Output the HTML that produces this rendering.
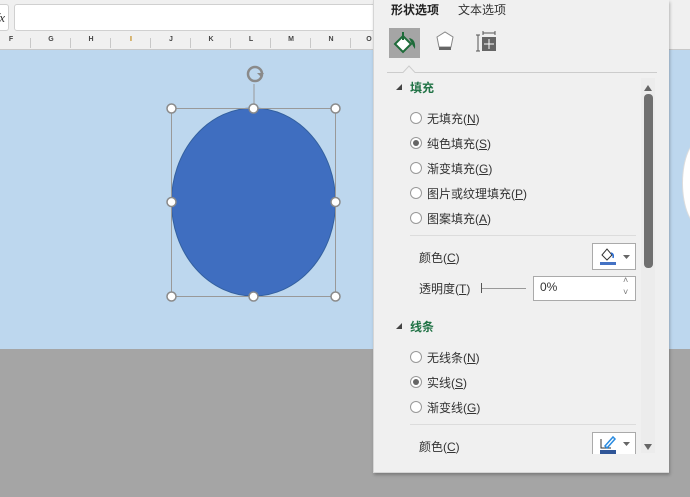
<!DOCTYPE html>
<html><head><meta charset="utf-8">
<style>
*{margin:0;padding:0;box-sizing:border-box}
body{width:690px;height:497px;overflow:hidden;position:relative;background:#a5a5a5;font-family:"Liberation Sans","Noto Sans CJK SC",sans-serif;font-size:12px;color:#333}
.abs{position:absolute}
.top{left:0;top:0;width:690px;height:35px;background:#f0f0f0}
.fbox{left:14px;top:4px;width:380px;height:27px;background:#fff;border:1px solid #d0d0d0;border-radius:3px}
.fx{left:-10px;top:4px;width:19px;height:27px;background:#fff;border:1px solid #d0d0d0;border-radius:3px;font-style:italic;font-size:13px;line-height:25px;text-align:right;padding-right:3px;font-family:"Liberation Serif",serif}
.cols{left:0;top:35px;width:690px;height:15px;background:#f0f0f0;border-bottom:1px solid #c8c8c8}
.col{position:absolute;top:36px;font-size:7px;font-weight:bold;color:#444;width:10px;text-align:center}
.sep{position:absolute;top:38px;width:1px;height:10px;background:#c8c8c8}
.blue{left:0;top:50px;width:690px;height:299px;background:#bdd7ee}
.panel{left:373px;top:0;width:296px;height:473px;background:#f0f0f0;border-left:1px solid #d5d5d5;border-bottom:1px solid #d5d5d5;box-shadow:1px 2px 3px rgba(0,0,0,.25)}
.t{position:absolute;white-space:nowrap;font-size:12px;color:#333}
.g{color:#217346;font-weight:bold}
.radio{position:absolute;width:12px;height:12px;border:1px solid #999;border-radius:50%;background:#fff}
.radio.on::after{content:"";position:absolute;left:2px;top:2px;width:6px;height:6px;border-radius:50%;background:#666}
.hr{position:absolute;height:1px;background:#dcdcdc}
.tri{position:absolute;width:0;height:0;border-left:6px solid transparent;border-bottom:6px solid #444}
u{text-decoration:underline}
</style></head><body>
<div class="abs top"></div>
<div class="abs fx">fx</div>
<div class="abs fbox"></div>
<div class="abs cols"></div>
<div class="col" style="left:6px">F</div>
<div class="sep" style="left:30px"></div>
<div class="col" style="left:46px">G</div>
<div class="sep" style="left:70px"></div>
<div class="col" style="left:86px">H</div>
<div class="sep" style="left:110px"></div>
<div class="col" style="left:126px;color:#c08000">I</div>
<div class="sep" style="left:150px"></div>
<div class="col" style="left:166px">J</div>
<div class="sep" style="left:190px"></div>
<div class="col" style="left:206px">K</div>
<div class="sep" style="left:230px"></div>
<div class="col" style="left:246px">L</div>
<div class="sep" style="left:270px"></div>
<div class="col" style="left:286px">M</div>
<div class="sep" style="left:310px"></div>
<div class="col" style="left:326px">N</div>
<div class="sep" style="left:350px"></div>
<div class="col" style="left:364px">O</div>
<div class="abs blue"></div>
<div class="abs" style="left:682px;top:138px;width:40px;height:90px;border-radius:50%;background:#fff;border:1px solid #ddd"></div>

<svg class="abs" style="left:0;top:0" width="373" height="349">
<line x1="254" y1="84" x2="254" y2="108" stroke="#999"/>
<circle cx="255" cy="74" r="7" fill="none" stroke="#8a8a8a" stroke-width="2.5"/>
<path d="M257 73 l7 0 l-3 4z" fill="#8a8a8a"/>
<ellipse cx="253.5" cy="202" rx="82" ry="94" fill="#3f6ec0" stroke="#33609f" stroke-width="1"/>
<rect x="171.5" y="108.5" width="164" height="188" fill="none" stroke="#999"/>
<g fill="#fff" stroke="#8a8a8a" stroke-width="1.5">
<circle cx="171.5" cy="108.5" r="4.5"/><circle cx="253.5" cy="108.5" r="4.5"/><circle cx="335.5" cy="108.5" r="4.5"/>
<circle cx="171.5" cy="202" r="4.5"/><circle cx="335.5" cy="202" r="4.5"/>
<circle cx="171.5" cy="296.5" r="4.5"/><circle cx="253.5" cy="296.5" r="4.5"/><circle cx="335.5" cy="296.5" r="4.5"/>
</g>
</svg>

<div class="abs panel">
<div class="t" style="left:17px;top:1px;font-weight:bold;color:#222">形状选项</div>
<div class="t" style="left:84px;top:1px">文本选项</div>
<div class="abs" style="left:15px;top:28px;width:31px;height:30px;background:#a5a5a5"></div>
<svg class="abs" style="left:15px;top:28px" width="110" height="30">
<path d="M6 16 L14 8 L22 16 L14 24 Z" fill="#fff" stroke="#1e6b3a" stroke-width="2"/>
<line x1="14" y1="4" x2="14" y2="12" stroke="#1e6b3a" stroke-width="2"/>
<path d="M20 10 Q27 11 26 21 L24 18 Z" fill="#1e6b3a"/>
<path d="M48 9 L56 4 L64 9 L62 19 L50 19 Z" fill="#fff" stroke="#888"/>
<rect x="50" y="19" width="12" height="3" fill="#666"/>
<line x1="89" y1="7" x2="89" y2="23" stroke="#555"/><line x1="87" y1="7" x2="91" y2="7" stroke="#555"/><line x1="87" y1="23" x2="91" y2="23" stroke="#555"/>
<line x1="94" y1="5" x2="106" y2="5" stroke="#555"/><line x1="94" y1="3" x2="94" y2="7" stroke="#555"/><line x1="106" y1="3" x2="106" y2="7" stroke="#555"/>
<rect x="93" y="9" width="14" height="14" fill="#666"/>
<path d="M100 11v10M95 16h10" stroke="#fff"/>
</svg>
<svg class="abs" style="left:13px;top:64px" width="272" height="10"><path d="M0 8.5 H16 L22 2 L28 8.5 H270" fill="none" stroke="#ccc"/></svg>
<div class="tri" style="left:22px;top:84px"></div>
<div class="t g" style="left:36px;top:79px">填充</div>
<div class="radio" style="left:36px;top:112px"></div><div class="t" style="left:53px;top:110px">无填充(<u>N</u>)</div>
<div class="radio on" style="left:36px;top:137px"></div><div class="t" style="left:53px;top:135px">纯色填充(<u>S</u>)</div>
<div class="radio" style="left:36px;top:162px"></div><div class="t" style="left:53px;top:160px">渐变填充(<u>G</u>)</div>
<div class="radio" style="left:36px;top:187px"></div><div class="t" style="left:53px;top:185px">图片或纹理填充(<u>P</u>)</div>
<div class="radio" style="left:36px;top:212px"></div><div class="t" style="left:53px;top:210px">图案填充(<u>A</u>)</div>
<div class="hr" style="left:36px;top:235px;width:226px"></div>
<div class="t" style="left:45px;top:249px">颜色(<u>C</u>)</div>
<div class="abs" style="left:218px;top:243px;width:44px;height:27px;border:1px solid #aaa;background:#fff"></div>
<svg class="abs" style="left:218px;top:243px" width="44" height="27"><path d="M10 12 L15 6 L20 12 L15 17Z" fill="#fff" stroke="#333"/><path d="M19 10 q3 1 2 5" stroke="#2a6bd0" fill="none" stroke-width="1.5"/><rect x="8" y="19" width="16" height="3" fill="#4472c4"/><path d="M31 12h7l-3.5 4z" fill="#666"/></svg>
<div class="t" style="left:45px;top:280px">透明度(<u>T</u>)</div>
<div class="abs" style="left:107px;top:283px;width:1px;height:10px;background:#555"></div>
<div class="abs" style="left:108px;top:288px;width:44px;height:1px;background:#999"></div>
<div class="abs" style="left:159px;top:276px;width:103px;height:25px;border:1px solid #aaa;background:#fff"></div>
<div class="t" style="left:166px;top:280px;color:#333">0%</div>
<div class="t" style="left:249px;top:275px;font-size:9px;color:#777">˄</div>
<div class="t" style="left:249px;top:287px;font-size:9px;color:#777">˅</div>
<div class="tri" style="left:22px;top:323px"></div>
<div class="t g" style="left:36px;top:318px">线条</div>
<div class="radio" style="left:36px;top:351px"></div><div class="t" style="left:53px;top:349px">无线条(<u>N</u>)</div>
<div class="radio on" style="left:36px;top:376px"></div><div class="t" style="left:53px;top:374px">实线(<u>S</u>)</div>
<div class="radio" style="left:36px;top:401px"></div><div class="t" style="left:53px;top:399px">渐变线(<u>G</u>)</div>
<div class="hr" style="left:36px;top:424px;width:226px"></div>
<div class="t" style="left:45px;top:438px">颜色(<u>C</u>)</div>
<div class="abs" style="left:218px;top:432px;width:44px;height:22px;border:1px solid #aaa;border-bottom:none;background:#fff;overflow:hidden"></div>
<svg class="abs" style="left:218px;top:432px" width="44" height="22"><path d="M9 7v9h10" fill="none" stroke="#333"/><path d="M13 14 L21 5 L23 7 L15 16Z" fill="none" stroke="#2a8be0" stroke-width="1.5"/><rect x="8" y="18" width="16" height="4" fill="#2f5597"/><path d="M31 10h7l-3.5 4z" fill="#666"/></svg>
<div class="abs" style="left:267px;top:78px;width:14px;height:375px;background:#ececec"></div>
<svg class="abs" style="left:267px;top:78px" width="14" height="375"><path d="M3 13h8l-4-6z" fill="#666"/><path d="M3 366h8l-4 6z" fill="#666"/></svg>
<div class="abs" style="left:270px;top:94px;width:9px;height:174px;border-radius:4px;background:#707070"></div>
</div>
</body></html>
